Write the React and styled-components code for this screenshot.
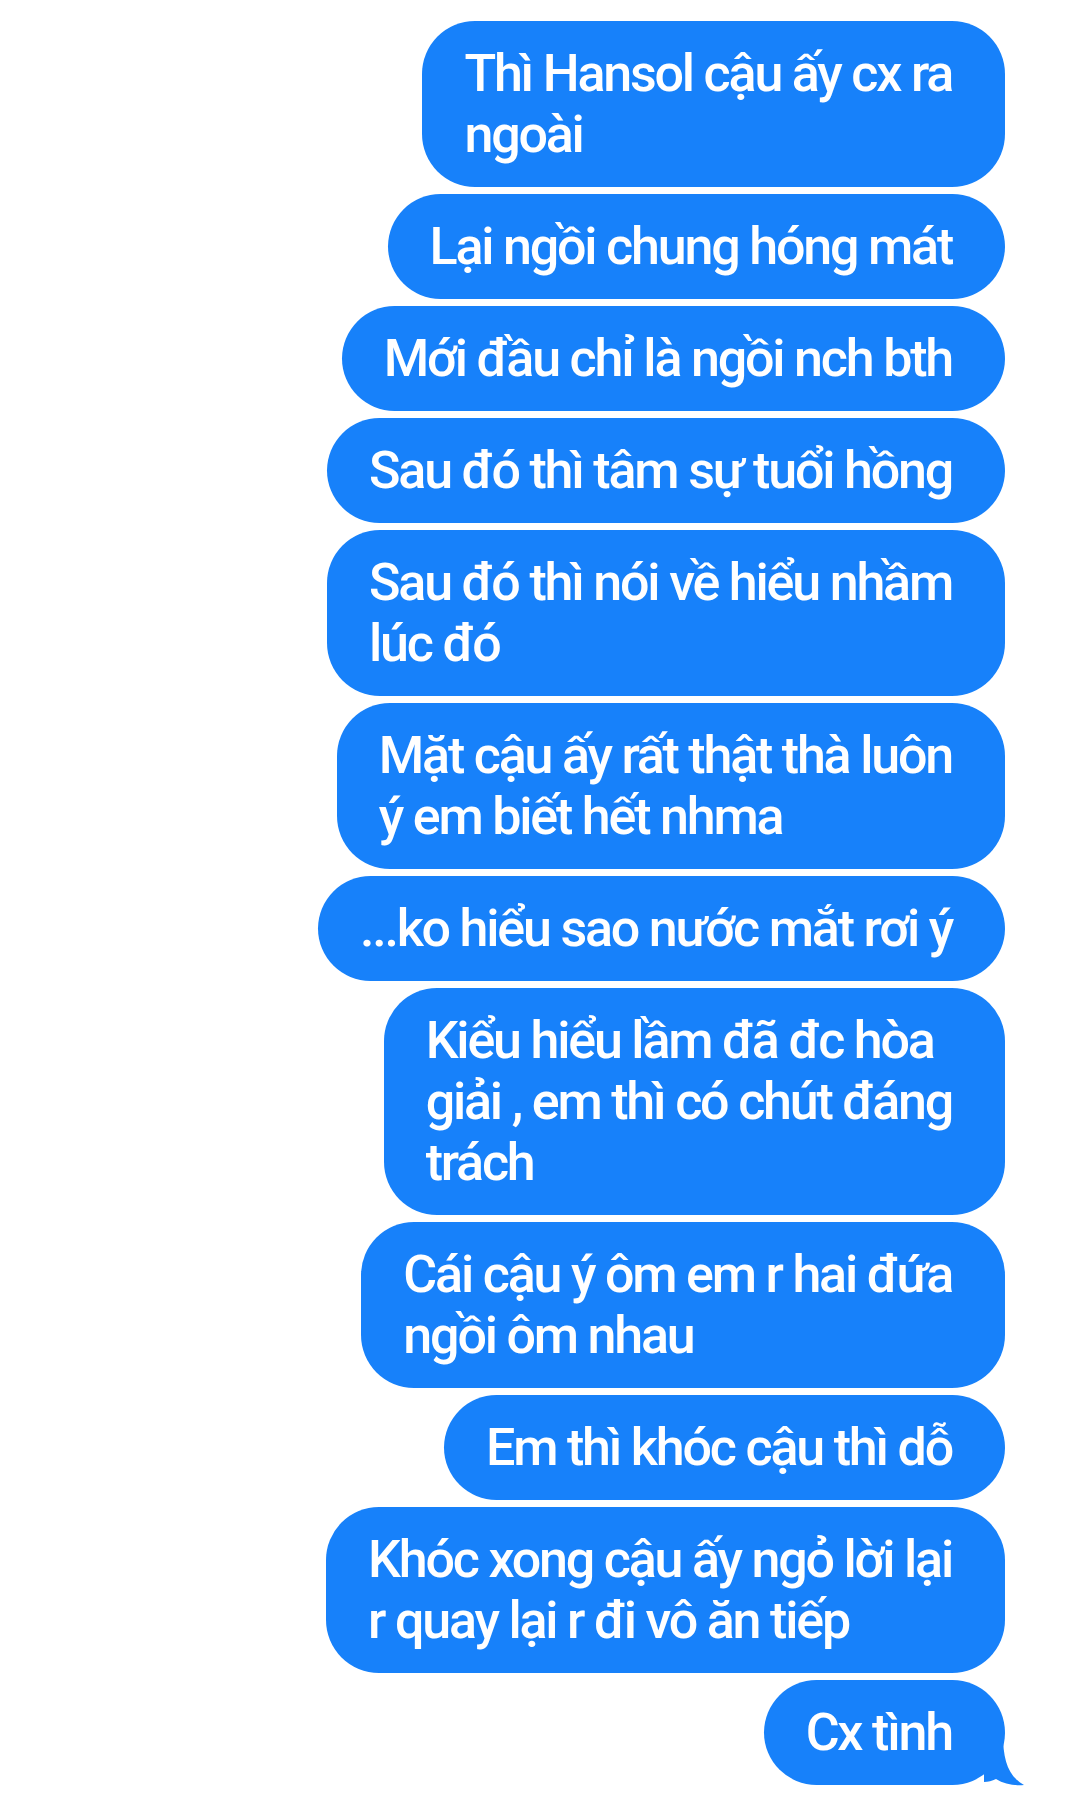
import React from 'react';
import styled, { createGlobalStyle } from 'styled-components';

const GlobalStyle = createGlobalStyle`
    html, body {
        margin: 0;
        padding: 0;
        background: #ffffff;
    }
    body {
        font-family: Roboto, "Noto Sans", "Liberation Sans", sans-serif;
    }
`;

const Thread = styled.main`
    display: flex;
    flex-direction: column;
    align-items: flex-end;
    gap: 7px;
    width: 1080px;
    min-height: 1805px;
    box-sizing: border-box;
    padding: 21px 75px 0 0;
    background: #ffffff;
`;

const Bubble = styled.div`
    position: relative;
    width: fit-content;
    padding: 22px 53px 22px 42px;
    border-radius: 53px;
    background: #1781fa;
    color: #ffffff;
    font-size: 52px;
    line-height: 61px;
    letter-spacing: -2.2px;
    font-weight: 500;
`;

const Line = styled.span`
    display: block;
    white-space: nowrap;
`;

const Tail = styled.svg`
    position: absolute;
    right: -19px;
    bottom: -1px;
    width: 40px;
    height: 52px;
    fill: #1781fa;
`;

const messages = [
    ['Thì Hansol cậu ấy cx ra', 'ngoài'],
    ['Lại ngồi chung hóng mát'],
    ['Mới đầu chỉ là ngồi nch bth'],
    ['Sau đó thì tâm sự tuổi hồng'],
    ['Sau đó thì nói về hiểu nhầm', 'lúc đó'],
    ['Mặt cậu ấy rất thật thà luôn', 'ý em biết hết nhma'],
    ['...ko hiểu sao nước mắt rơi ý'],
    ['Kiểu hiểu lầm đã đc hòa', 'giải , em thì có chút đáng', 'trách'],
    ['Cái cậu ý ôm em r hai đứa', 'ngồi ôm nhau'],
    ['Em thì khóc cậu thì dỗ'],
    ['Khóc xong cậu ấy ngỏ lời lại', 'r quay lại r đi vô ăn tiếp'],
    ['Cx tình'],
];

function App() {
    return (
        <>
            <GlobalStyle />
            <Thread>
                {messages.map((lines, i) => {
                    const last = i === messages.length - 1;
                    return (
                        <Bubble key={i}>
                            {lines.map((line, j) => (
                                <Line key={j}>{line}</Line>
                            ))}
                            {last &&
                                <Tail viewBox="0 0 40 52" aria-hidden="true">
                                    <path d="M0 0 H19 C19 26 24 42 40 51 C30 52 20 50 12 45 C8 47 4 48 0 48 Z" />
                                </Tail>
                            }
                        </Bubble>
                    );
                })}
            </Thread>
        </>
    );
}

export default App;
